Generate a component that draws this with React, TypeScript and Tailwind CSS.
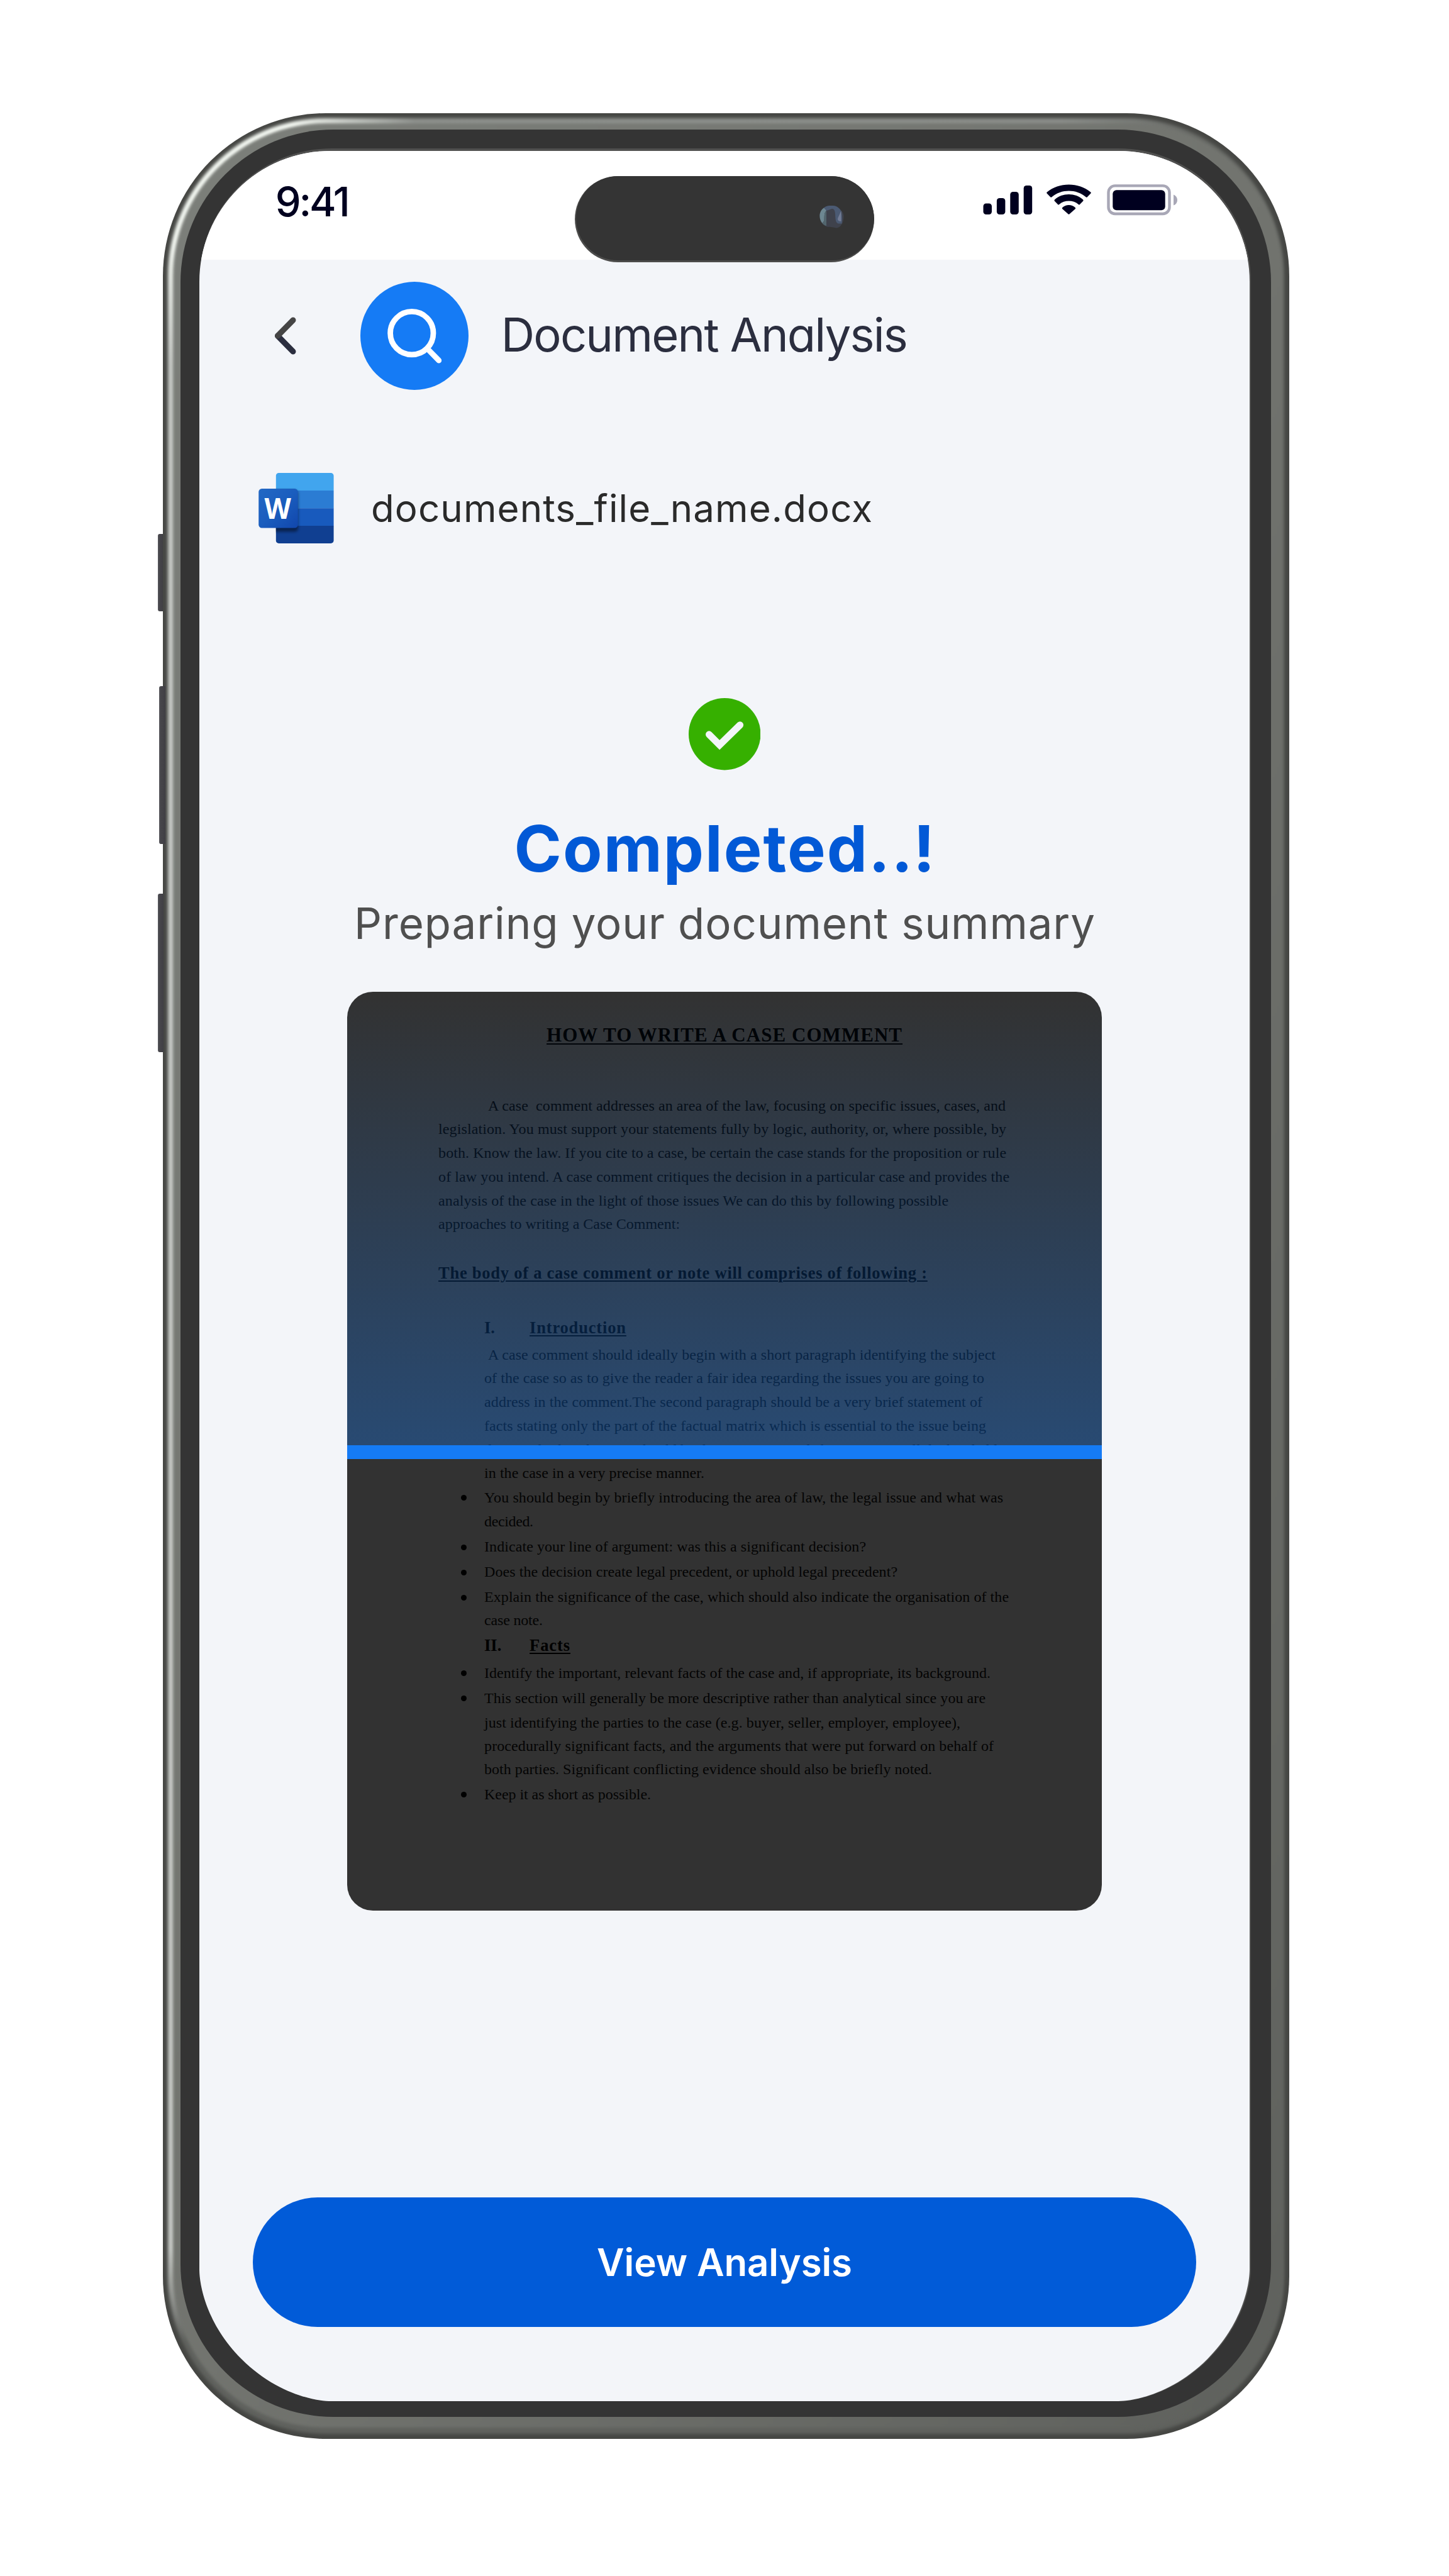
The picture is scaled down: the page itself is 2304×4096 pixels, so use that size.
import { useLayoutEffect, useRef, useState } from "react";

/* Text on one line, tracked so that it is exactly `width` pixels wide. */
function FitText({ width, className = "", children }: { width: number; className?: string; children: string }) {
  const ref = useRef<HTMLSpanElement>(null);
  const [tracking, setTracking] = useState(0);
  useLayoutEffect(() => {
    const el = ref.current;
    if (!el) return;
    el.style.letterSpacing = "0px";
    const natural = el.getBoundingClientRect().width;
    const value = (width - natural) / (children.length - 1);
    el.style.letterSpacing = `${value}px`;
    setTracking(value);
  }, [width, children]);
  return (
    <span
      ref={ref}
      className={`inline-block shrink-0 whitespace-pre ${className}`}
      style={{ letterSpacing: `${tracking}px`, marginRight: `${-tracking}px` }}
    >
      {children}
    </span>
  );
}

type Line = {
  gap: number;
  width: number;
  text: string;
  kind?: "title" | "body" | "start" | "heading" | "section" | "lead" | "item" | "bullet";
  number?: string;
};

const lines: Line[] = [
  { gap: 84.5, width: 565, text: "HOW TO WRITE A CASE COMMENT", kind: "title" },
  { gap: 108.7, width: 823, text: "A case  comment addresses an area of the law, focusing on specific issues, cases, and", kind: "start" },
  { gap: 37.7, width: 903, text: "legislation. You must support your statements fully by logic, authority, or, where possible, by", kind: "body" },
  { gap: 38, width: 903, text: "both. Know the law. If you cite to a case, be certain the case stands for the proposition or rule", kind: "body" },
  { gap: 37.2, width: 908, text: "of law you intend. A case comment critiques the decision in a particular case and provides the", kind: "body" },
  { gap: 38.2, width: 811, text: "analysis of the case in the light of those issues We can do this by following possible", kind: "body" },
  { gap: 37.5, width: 384, text: "approaches to writing a Case Comment:", kind: "body" },
  { gap: 79.2, width: 777, text: "The body of a case comment or note will comprises of following :", kind: "heading" },
  { gap: 87.4, width: 153, text: "Introduction", kind: "section", number: "I." },
  { gap: 41, width: 807, text: "A case comment should ideally begin with a short paragraph identifying the subject", kind: "lead" },
  { gap: 37.6, width: 795, text: "of the case so as to give the reader a fair idea regarding the issues you are going to", kind: "item" },
  { gap: 38, width: 792, text: "address in the comment.The second paragraph should be a very brief statement of", kind: "item" },
  { gap: 37.6, width: 798, text: "facts stating only the part of the factual matrix which is essential to the issue being", kind: "item" },
  { gap: 37.6, width: 816, text: "discussed. Therefore one should be discriminating and choose to state all the law held", kind: "item" },
  { gap: 37.3, width: 350, text: "in the case in a very precise manner.", kind: "item" },
  { gap: 39, width: 825, text: "You should begin by briefly introducing the area of law, the legal issue and what was", kind: "bullet" },
  { gap: 38.5, width: 78, text: "decided.", kind: "item" },
  { gap: 39.6, width: 607, text: "Indicate your line of argument: was this a significant decision?", kind: "bullet" },
  { gap: 40.1, width: 657, text: "Does the decision create legal precedent, or uphold legal precedent?", kind: "bullet" },
  { gap: 40, width: 834, text: "Explain the significance of the case, which should also indicate the organisation of the", kind: "bullet" },
  { gap: 37.1, width: 93, text: "case note.", kind: "item" },
  { gap: 41.1, width: 64, text: "Facts", kind: "section", number: "II." },
  { gap: 42.4, width: 805, text: "Identify the important, relevant facts of the case and, if appropriate, its background.", kind: "bullet" },
  { gap: 40.2, width: 797, text: "This section will generally be more descriptive rather than analytical since you are", kind: "bullet" },
  { gap: 39, width: 757, text: "just identifying the parties to the case (e.g. buyer, seller, employer, employee),", kind: "item" },
  { gap: 37.1, width: 810, text: "procedurally significant facts, and the arguments that were put forward on behalf of", kind: "item" },
  { gap: 36.6, width: 712, text: "both parties. Significant conflicting evidence should also be briefly noted.", kind: "item" },
  { gap: 40, width: 265, text: "Keep it as short as possible.", kind: "bullet" },
];

const indent = {
  title: "pl-[317px] text-[31px] font-bold text-black",
  body: "pl-[145px]",
  start: "pl-[224px]",
  heading: "pl-[145px] text-[26.5px] font-bold text-black",
  section: "pl-[218px] text-[26.5px] font-bold text-black",
  lead: "pl-[224px]",
  item: "pl-[218px]",
  bullet: "pl-[181px]",
};

function DocumentLine({ line }: { line: Line }) {
  const kind = line.kind ?? "body";
  const underlined = kind === "title" || kind === "heading" || kind === "section";
  return (
    <div className={`flex items-end ${indent[kind]}`} style={{ height: `${line.gap}px` }}>
      {kind === "bullet" && (
        <span className="flex h-[22px] w-[37px] shrink-0 items-center">
          <span className="size-[9px] rounded-full bg-black" />
        </span>
      )}
      {line.number && <span className="w-[72px] shrink-0">{line.number}</span>}
      <FitText width={line.width} className={underlined ? "underline decoration-2 underline-offset-[3px]" : ""}>
        {line.text}
      </FitText>
    </div>
  );
}

function ScannedDocument() {
  return (
    <div className="relative mt-[66.5px] h-[1461px] w-[1200px] overflow-hidden rounded-[41px] bg-[#323232]">
      <div className="font-['Liberation_Serif',serif] text-[24px] leading-none text-[#040404]">
        {lines.map((line) => (
          <DocumentLine key={line.text} line={line} />
        ))}
      </div>
      <div className="absolute inset-x-0 top-0 h-[721px] bg-linear-to-b from-[#157bf5]/0 to-[#157bf5]/33" />
      <div className="absolute inset-x-0 top-[721px] h-[22.5px] bg-[#157bf5]" />
    </div>
  );
}

function StatusBar() {
  return (
    <div className="flex h-[173.5px] items-start justify-between bg-white pr-[112.600px] pl-[121px]">
      <div className="pt-[41.500px] text-[65px] leading-[80px] font-medium text-[#00001f]">
        <FitText width={119}>9:41</FitText>
      </div>
      <svg className="mt-[50px] h-[56px] w-[312px]" viewBox="0 0 312 56" fill="#00001f">
        <rect x="0.5" y="33.5" width="13.5" height="17.5" rx="4.5" />
        <rect x="21.9" y="25" width="13.5" height="26" rx="4.5" />
        <rect x="43.3" y="15" width="13.5" height="36" rx="4.5" />
        <rect x="64.7" y="5" width="13.5" height="46" rx="4.5" />
        <g transform="translate(101 3.5)">
          <path d="M0.8 14.2a1.6 1.6 0 0 1 0-2.3C19.8-4 51.200-4 70.200 11.900a1.600 1.600 0 0 1 0 2.300L64.800 19.700a1.600 1.600 0 0 1-2.200 0C47.300 6.700 23.700 6.700 8.400 19.700a1.600 1.600 0 0 1-2.200 0Z" />
          <path d="M12.900 26.300a1.600 1.600 0 0 1 0-2.300C25 12.800 46 12.800 58.100 24a1.600 1.600 0 0 1 0 2.300L53 31.500a1.600 1.600 0 0 1-2.200 0C42.500 24.200 28.500 24.200 20.200 31.500a1.600 1.600 0 0 1-2.200 0Z" />
          <path d="M25.300 38.700a1.600 1.600 0 0 1 0-2.300C31 31.200 40 31.200 45.700 36.400a1.600 1.600 0 0 1 0 2.300L36.600 46.700a1.600 1.600 0 0 1-2.200 0Z" />
        </g>
        <rect x="199.500" y="5.400" width="97" height="44.600" rx="10.500" fill="none" stroke="#a8a7b6" strokeWidth="4.400" />
        <rect x="206.300" y="12.200" width="83.400" height="32" rx="6" />
        <path d="M303 19.400C311 22 311 34 303 36.600Z" fill="#a8a7b6" />
      </svg>
    </div>
  );
}

function DynamicIsland() {
  return (
    <div className="absolute top-[279.5px] left-[914px] h-[137.800px] w-[475.800px] overflow-hidden rounded-[69px] bg-[#4c4c4b]">
      <div className="ml-[2px] h-[134.300px] w-[473.800px] rounded-[68px] bg-[#343434] pt-[47px] pl-[387px]">
        <svg className="h-[36px] w-[39px]" viewBox="0 0 39 36">
          <path d="M6.500 4C11-1 23-1.500 29 2.500C34 6 38.600 11 38.600 17C38.600 23 37 28 34.500 31C30 37 25 35.500 22 34.500C17 33.500 12 35 8 31.500C3 27 0 21 0 16C0 11 3 7 6.500 4Z" fill="#3f424c" />
          <path d="M6.500 4C11-1 23-1.500 29 2.500C34 6 37 11 35.500 28.500H30C25 27 25.500 20 25 13C24.500 5 21 4 17 6C14 7 12 8 9 8Z" fill="#4b5a73" />
          <path d="M7 3.500L11 8C7 11 8 18 7.500 24L4.500 28C-1 22-1.500 9 7 3.500Z" fill="#6d8791" />
          <path d="M11 8.500V32C8 31.500 6 30 4.500 28L7.500 24C8 18 7 11 11 8.500Z" fill="#52656d" />
          <path d="M34.500 8.500V25C29 25 28 22 30 18C32 14 33 11 34.500 8.500Z" fill="#727c95" />
        </svg>
      </div>
    </div>
  );
}

function WordIcon() {
  return (
    <svg className="h-[112px] w-[120px] shrink-0 overflow-visible" viewBox="0 0 175 164">
      <defs>
        <linearGradient id="wordFront" x1="0" y1="0" x2="1" y2="1">
          <stop offset="0" stopColor="#2368c4" />
          <stop offset="0.5" stopColor="#1a5dbe" />
          <stop offset="1" stopColor="#1146ac" />
        </linearGradient>
        <clipPath id="wordSheet">
          <rect x="40" y="0" width="135" height="164" rx="7" />
        </clipPath>
        <filter id="wordShadow" x="-30%" y="-30%" width="160%" height="160%">
          <feGaussianBlur stdDeviation="3.500" />
        </filter>
      </defs>
      <g clipPath="url(#wordSheet)">
        <rect x="40" y="0" width="135" height="41" fill="#41a5ee" />
        <rect x="40" y="41" width="135" height="41.500" fill="#2b7cd3" />
        <rect x="40" y="82.300" width="135" height="41" fill="#185abd" />
        <rect x="40" y="123" width="135" height="41" fill="#103f91" />
        <rect x="0" y="40" width="92" height="97" rx="8" fill="#000" opacity="0.450" filter="url(#wordShadow)" />
      </g>
      <rect x="0" y="36.500" width="91.500" height="91.500" rx="7.500" fill="url(#wordFront)" />
      <text x="44.700" y="106.700" textAnchor="middle" fontSize="69" fontWeight="700" fill="#fff" fontFamily="Open Sans" textLength="62" lengthAdjust="spacingAndGlyphs">
        W
      </text>
    </svg>
  );
}

function Header() {
  return (
    <div className="flex w-full items-center pt-[34.500px] pl-[119px]">
      <svg className="h-[62px] w-[36px] shrink-0" viewBox="0 0 36 62" fill="none" strokeWidth="9" strokeLinecap="round" strokeLinejoin="round">
        <path d="M30 56L5.500 31" stroke="#2b2e3f" />
        <path d="M30 6L5.500 31" stroke="#454545" />
      </svg>
      <div className="ml-[101.500px] size-[172px] shrink-0 rounded-full bg-[#157bf5]">
        <svg className="size-full" viewBox="0 0 251.500 251.500" fill="none" stroke="#fff" strokeWidth="12.800" strokeLinecap="round">
          <circle cx="119.600" cy="119.400" r="50" />
          <path d="M156.500 156.500L182.500 183" />
        </svg>
      </div>
      <h1 className="mb-[4px] ml-[51.500px] text-[74px] leading-[90px] font-[430] text-[#2b2e3f] [font-feature-settings:'cv11'_1,'ss03'_1]">
        <FitText width={647}>Document Analysis</FitText>
      </h1>
    </div>
  );
}

function Screen() {
  return (
    <div className="flex h-[3578.600px] w-[1670.500px] flex-col items-center overflow-hidden rounded-t-[208px] rounded-b-[210px] bg-[#f3f5f9] [corner-shape:round_round_superellipse(0.85)_superellipse(0.85)]">
      <div className="w-full">
        <StatusBar />
      </div>
      <Header />
      <div className="mt-[132px] flex w-full items-center pl-[94.200px]">
        <WordIcon />
        <span className="ml-[59px] text-[60px] leading-[80px] text-[#2a2a2a]">
          <FitText width={797}>documents_file_name.docx</FitText>
        </span>
      </div>
      <svg className="mt-[246.500px] size-[114.500px]" viewBox="0 0 167.500 167.500">
        <circle cx="83.700" cy="83.700" r="83.700" fill="#36b000" />
        <path d="M47.500 84.500L72 109L119.500 62.500" fill="none" stroke="#f3f5f9" strokeWidth="16" strokeLinecap="round" strokeLinejoin="miter" />
      </svg>
      <h2 className="mt-[64.500px] text-[102px] leading-[120px] font-bold text-[#0259d6]">
        <FitText width={669}>Completed..!</FitText>
      </h2>
      <p className="mt-[17px] text-[69px] leading-[84px] text-[#4f4f4f]">
        <FitText width={1178}>Preparing your document summary</FitText>
      </p>
      <ScannedDocument />
      <button className="mt-[456.500px] flex h-[206px] w-[1500px] items-center justify-center rounded-full bg-[#015bd8] text-[60px] font-semibold text-white">
        <FitText width={406}>View Analysis</FitText>
      </button>
    </div>
  );
}

function SideButton({ className }: { className: string }) {
  return <div className={`absolute rounded-l-[3px] bg-linear-to-r from-[#5b5b61] via-[#47464b] via-25% to-[#403f44] ${className}`} />;
}

export default function App() {
  return (
    <div className="relative h-[4096px] w-[2304px] overflow-hidden bg-white pt-[180px] pl-[258.500px] font-['Inter',sans-serif]">
      <div className="relative h-[3698px] w-[1791px] overflow-hidden rounded-[259px] bg-[#464744] pt-[25.500px] pl-[28.300px]">
        <div className="absolute inset-[8px] rounded-[251px] bg-[linear-gradient(to_bottom,transparent_0%,transparent_92%,#60625e_96%),radial-gradient(circle_at_70px_70px,#f6faf4_0px,#f6faf4_140px,transparent_330px),linear-gradient(to_right,#c8cbc7_0%,#c8cbc7_2%,#8f928e_16%,#8b8e8a_80%,#686a66_92%,#60625e_100%)] blur-[2.500px]" />
        <div className="absolute top-[16px] right-[10px] bottom-[18px] left-[16px] rounded-[243px] bg-linear-to-br from-[#7c7f7a] via-[#72746f] to-[#5f615d] blur-[2px]" />
        <div className="relative h-[3637px] w-[1734.500px] rounded-[243px] bg-[#343434] pt-[30px] pl-[30px]">
          <div className="h-[3582.700px] w-[1672.500px] rounded-t-[211px] rounded-b-[210px] bg-[#50504f] pt-[4px] [corner-shape:round_round_superellipse(0.85)_superellipse(0.85)]">
            <Screen />
          </div>
        </div>
      </div>
      <SideButton className="top-[848.500px] left-[251.400px] h-[123px] w-[8px]" />
      <SideButton className="top-[1091px] left-[252.600px] h-[250.600px] w-[10px]" />
      <SideButton className="top-[1421.400px] left-[251.400px] h-[251.300px] w-[8.500px]" />
      <DynamicIsland />
    </div>
  );
}
